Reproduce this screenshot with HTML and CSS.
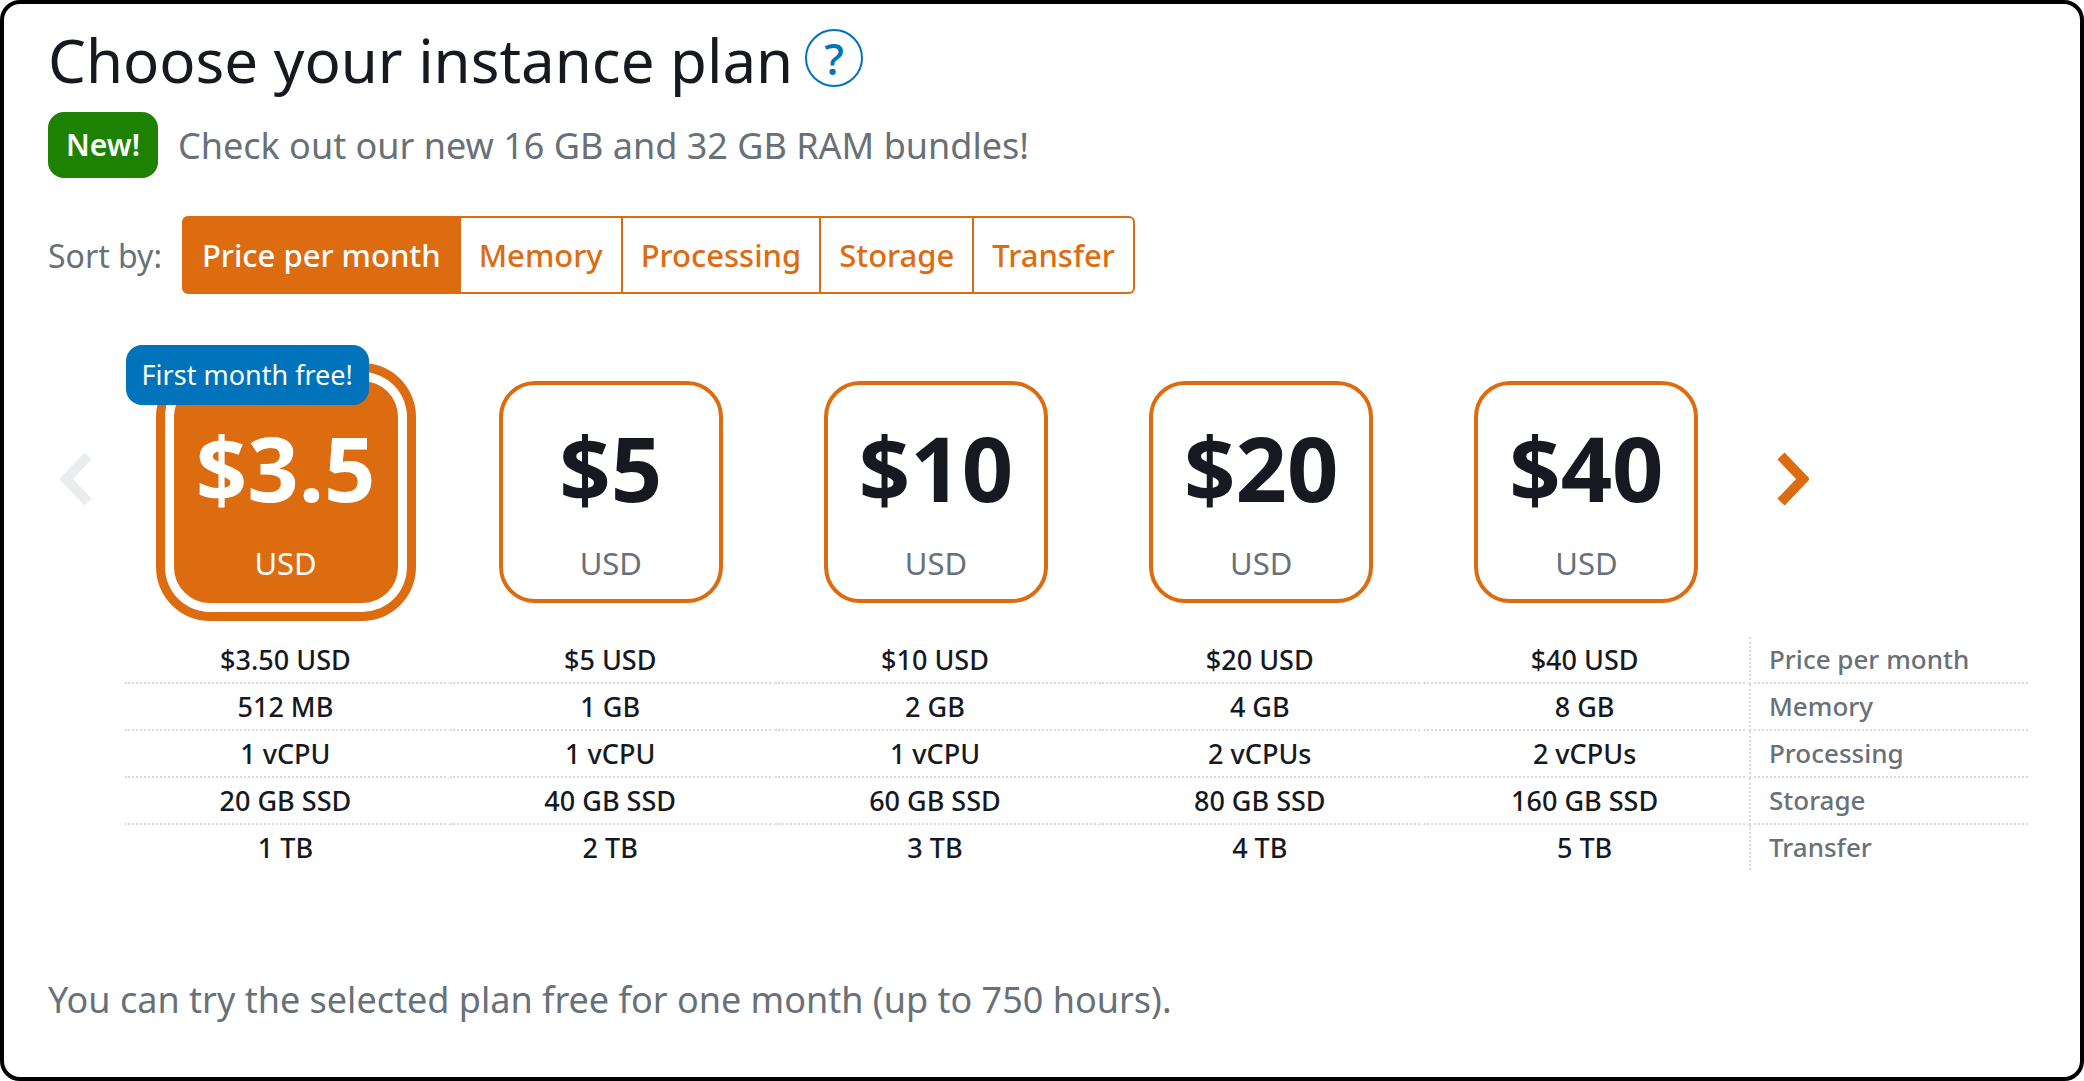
FILE: index.html
```html
<!DOCTYPE html>
<html lang="en">
<head>
    <meta charset="UTF-8">
    <meta name="viewport" content="width=device-width, initial-scale=1.0">
    <title>Choose your instance plan</title>
    <link rel="stylesheet" href="styles.css">
</head>
<body>
    <main class="panel">
        <header class="heading">
            <h1>Choose your instance plan</h1>
            <button type="button" class="help" aria-label="Help">?</button>
        </header>

        <p class="notice">
            <span class="badge-new">New!</span>
            <span>Check out our new 16 GB and 32 GB RAM bundles!</span>
        </p>

        <div class="sort">
            <span id="sort-label">Sort by:</span>
            <div class="sort-options" role="group" aria-labelledby="sort-label">
                <button type="button" class="active" aria-pressed="true">Price per month</button>
                <button type="button">Memory</button>
                <button type="button">Processing</button>
                <button type="button">Storage</button>
                <button type="button">Transfer</button>
            </div>
        </div>

        <div class="plans">
            <button type="button" class="arrow" aria-label="Previous plans" disabled>
                <svg width="32" height="54" viewBox="0 0 32 54"><path d="M28 4 L6 27 L28 50"/></svg>
            </button>
            <button type="button" class="plan selected" aria-pressed="true">
                <span class="free">First month free!</span>
                <span class="price">$3.5</span>
                <span class="currency">USD</span>
            </button>
            <button type="button" class="plan">
                <span class="price">$5</span>
                <span class="currency">USD</span>
            </button>
            <button type="button" class="plan">
                <span class="price">$10</span>
                <span class="currency">USD</span>
            </button>
            <button type="button" class="plan">
                <span class="price">$20</span>
                <span class="currency">USD</span>
            </button>
            <button type="button" class="plan">
                <span class="price">$40</span>
                <span class="currency">USD</span>
            </button>
            <button type="button" class="arrow next" aria-label="Next plans">
                <svg width="32" height="54" viewBox="0 0 32 54"><path d="M4 4 L26 27 L4 50"/></svg>
            </button>
        </div>

        <table class="specs">
            <tbody>
                <tr><td>$3.50 USD</td><td>$5 USD</td><td>$10 USD</td><td>$20 USD</td><td>$40 USD</td><th scope="row">Price per month</th></tr>
                <tr><td>512 MB</td><td>1 GB</td><td>2 GB</td><td>4 GB</td><td>8 GB</td><th scope="row">Memory</th></tr>
                <tr><td>1 vCPU</td><td>1 vCPU</td><td>1 vCPU</td><td>2 vCPUs</td><td>2 vCPUs</td><th scope="row">Processing</th></tr>
                <tr><td>20 GB SSD</td><td>40 GB SSD</td><td>60 GB SSD</td><td>80 GB SSD</td><td>160 GB SSD</td><th scope="row">Storage</th></tr>
                <tr><td>1 TB</td><td>2 TB</td><td>3 TB</td><td>4 TB</td><td>5 TB</td><th scope="row">Transfer</th></tr>
            </tbody>
        </table>

        <p class="trial">You can try the selected plan free for one month (up to 750 hours).</p>
    </main>
</body>
</html>
```
FILE: styles.css
```css
* {
    box-sizing: border-box;
}
body {
    margin: 0;
    background: #fff;
    color: #687078;
    font-family: "Noto Sans", "Open Sans", sans-serif;
}
button {
    padding: 0;
    border: none;
    background: none;
    font-family: inherit;
    cursor: pointer;
}
.panel {
    min-height: 100vh;
    padding: 16px 52px 32px 44px;
    border: 4px solid #000;
    border-radius: 20px;
}
.heading {
    display: flex;
    align-items: center;
    gap: 12px;
}
h1 {
    margin: 0;
    color: #16191f;
    font-size: 60px;
    font-weight: 400;
    line-height: 80px;
}
.help {
    width: 58px;
    height: 58px;
    margin-bottom: 4px;
    border: 2px solid #0073bb;
    border-radius: 50%;
    color: #0073bb;
    font-size: 44px;
    font-weight: 500;
    line-height: 50px;
}
.notice {
    display: flex;
    align-items: center;
    gap: 20px;
    margin: 12px 0 38px;
    font-size: 36px;
}
.badge-new {
    padding: 0 18px;
    border-radius: 16px;
    background: #1d8102;
    color: #fff;
    font-size: 30px;
    font-weight: 600;
    line-height: 66px;
}
.sort {
    display: flex;
    align-items: center;
    gap: 20px;
    font-size: 32px;
}
.sort-options {
    display: flex;
}
.sort-options button {
    height: 78px;
    padding: 0 18px;
    border: 2px solid #dd6b10;
    border-left-width: 0;
    color: #dd6b10;
    font-size: 31px;
    font-weight: 500;
}
.sort-options button:first-child {
    border-radius: 6px 0 0 6px;
}
.sort-options button:last-child {
    border-radius: 0 6px 6px 0;
}
.sort-options .active {
    border-left-width: 2px;
    background: #dd6b10;
    color: #fff;
}
/* roughly the same columns as the specs table below */
.plans {
    display: grid;
    grid-template-columns: 75px repeat(5, 1fr) 279px;
    align-items: center;
    justify-items: center;
    margin-top: 87px;
}
.arrow {
    display: flex;
    justify-self: start;
    margin-bottom: 26px;
    padding-left: 12px;
}
.arrow.next {
    padding-left: 28px;
}
.arrow path {
    fill: none;
    stroke: #dd6b10;
    stroke-width: 10;
}
.arrow:disabled path {
    stroke: #eaeded;
}
.plan {
    position: relative;
    display: flex;
    flex-direction: column;
    align-items: center;
    width: 224px;
    height: 222px;
    padding-top: 32px;
    border: 4px solid #dd6b10;
    border-radius: 36px;
    color: #687078;
}
.price {
    color: #16191f;
    font-size: 90px;
    font-weight: 700;
    line-height: 100px;
}
.currency {
    margin-top: 26px;
    font-size: 31px;
    line-height: 40px;
}
.selected {
    background: #dd6b10;
    color: #fff;
    box-shadow: 0 0 0 9px #fff, 0 0 0 18px #dd6b10;
}
.selected .price {
    color: #fff;
}
.free {
    position: absolute;
    top: -40px;
    left: -52px;
    padding: 0 16px;
    border-radius: 16px;
    background: #0073bb;
    font-size: 27px;
    font-weight: 400;
    line-height: 60px;
    white-space: nowrap;
}
.specs {
    width: calc(100% - 77px);
    margin: 34px 0 0 77px;
    table-layout: fixed;
    border-spacing: 0;
    font-size: 27px;
    font-weight: 500;
    line-height: 45px;
}
.specs td,
.specs th {
    padding: 0;
    border-bottom: 2px dotted #d5dbdb;
}
/* small break between the columns' rules */
.specs td {
    border-right: 4px solid transparent;
    color: #16191f;
    text-align: center;
}
.specs th {
    width: 279px;
    padding-left: 18px;
    border-left: 2px dotted #d5dbdb;
    font-size: 26px;
    font-weight: 500;
    text-align: left;
}
.specs tr:last-child > * {
    border-bottom: none;
}
.trial {
    margin: 104px 0 0;
    font-size: 36px;
    line-height: 52px;
}
```
